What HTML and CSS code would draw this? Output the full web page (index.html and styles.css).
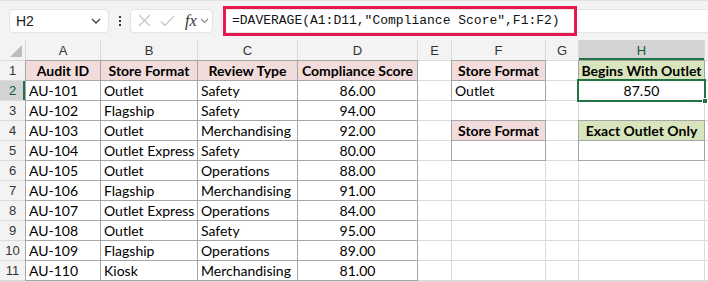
FILE: index.html
```html
<!DOCTYPE html>
<html lang="en">

<head>
    <meta charset="UTF-8">
    <meta name="viewport" content="width=device-width, initial-scale=1.0">
    <title>DAVERAGE</title>
    <link rel="stylesheet" href="styles.css">
</head>

<body>
    <!-- formula bar -->
    <div class="toolbar">
        <div class="namebox">
            <span>H2</span>
            <svg class="chev" width="10" height="6" viewBox="0 0 10 6"><path d="M1 1l4 4 4-4" fill="none" stroke="#444" stroke-width="1.3"/></svg>
        </div>
        <div class="dots"><i></i><i></i><i></i></div>
        <div class="fxbox">
            <svg width="13" height="13" viewBox="0 0 13 13"><path d="M1 1l11 11M12 1L1 12" stroke="#c4c4c4" stroke-width="1.2"/></svg>
            <svg width="15" height="12" viewBox="0 0 15 12"><path d="M1 6.5l4 4L14 1" fill="none" stroke="#c4c4c4" stroke-width="1.2"/></svg>
            <span class="fx">fx</span>
            <svg width="9" height="6" viewBox="0 0 9 6"><path d="M1 1l3.5 3.5L8 1" fill="none" stroke="#888" stroke-width="1.1"/></svg>
        </div>
        <div class="formula">
            <span class="formula-text">=DAVERAGE(A1:D11,"Compliance Score",F1:F2)</span>
        </div>
    </div>

    <!-- worksheet -->
    <div class="sheet">
        <div class="hd corner"><svg width="12" height="12" viewBox="0 0 12 12"><path d="M12 0V12H0z" fill="#bdbdbd"/></svg></div>
        <div class="hd">A</div><div class="hd">B</div><div class="hd">C</div><div class="hd">D</div>
        <div class="hd">E</div><div class="hd">F</div><div class="hd">G</div><div class="hd sel-col">H</div><div class="hd"></div>

        <div class="rh">1</div>
        <div class="c b th pink">Audit ID</div><div class="c b th pink">Store Format</div><div class="c b th pink">Review Type</div><div class="c b th pink">Compliance Score</div>
        <div class="c"></div><div class="c b th pink">Store Format</div><div class="c"></div><div class="c b th green">Begins With Outlet</div><div class="c"></div>

        <div class="rh sel-row">2</div>
        <div class="c b">AU-101</div><div class="c b">Outlet</div><div class="c b">Safety</div><div class="c b num">86.00</div>
        <div class="c"></div><div class="c b">Outlet</div><div class="c"></div><div class="c b num active">87.50</div><div class="c"></div>

        <div class="rh">3</div>
        <div class="c b">AU-102</div><div class="c b">Flagship</div><div class="c b">Safety</div><div class="c b num">94.00</div>
        <div class="c"></div><div class="c"></div><div class="c"></div><div class="c"></div><div class="c"></div>

        <div class="rh">4</div>
        <div class="c b">AU-103</div><div class="c b">Outlet</div><div class="c b">Merchandising</div><div class="c b num">92.00</div>
        <div class="c"></div><div class="c b th pink">Store Format</div><div class="c"></div><div class="c b th green">Exact Outlet Only</div><div class="c"></div>

        <div class="rh">5</div>
        <div class="c b">AU-104</div><div class="c b">Outlet Express</div><div class="c b">Safety</div><div class="c b num">80.00</div>
        <div class="c"></div><div class="c b"></div><div class="c"></div><div class="c b"></div><div class="c"></div>

        <div class="rh">6</div>
        <div class="c b">AU-105</div><div class="c b">Outlet</div><div class="c b">Operations</div><div class="c b num">88.00</div>
        <div class="c"></div><div class="c"></div><div class="c"></div><div class="c"></div><div class="c"></div>

        <div class="rh">7</div>
        <div class="c b">AU-106</div><div class="c b">Flagship</div><div class="c b">Merchandising</div><div class="c b num">91.00</div>
        <div class="c"></div><div class="c"></div><div class="c"></div><div class="c"></div><div class="c"></div>

        <div class="rh">8</div>
        <div class="c b">AU-107</div><div class="c b">Outlet Express</div><div class="c b">Operations</div><div class="c b num">84.00</div>
        <div class="c"></div><div class="c"></div><div class="c"></div><div class="c"></div><div class="c"></div>

        <div class="rh">9</div>
        <div class="c b">AU-108</div><div class="c b">Outlet</div><div class="c b">Safety</div><div class="c b num">95.00</div>
        <div class="c"></div><div class="c"></div><div class="c"></div><div class="c"></div><div class="c"></div>

        <div class="rh">10</div>
        <div class="c b">AU-109</div><div class="c b">Flagship</div><div class="c b">Operations</div><div class="c b num">89.00</div>
        <div class="c"></div><div class="c"></div><div class="c"></div><div class="c"></div><div class="c"></div>

        <div class="rh">11</div>
        <div class="c b">AU-110</div><div class="c b">Kiosk</div><div class="c b">Merchandising</div><div class="c b num">81.00</div>
        <div class="c"></div><div class="c"></div><div class="c"></div><div class="c"></div><div class="c"></div>
    </div>
</body>

</html>
```

FILE: styles.css
```css
body {
    margin: 0;
    width: 708px;
    height: 282px;
    overflow: hidden;
    background-color: #fff;
    font-family: "Liberation Sans", Arial, sans-serif;
}

/* formula bar */
.toolbar {
    height: 40px;
    background-color: #f3f3f3;
    display: flex;
    align-items: center;
    box-sizing: border-box;
    border-top: 1px solid #e2e2e2;
}

.namebox {
    margin-left: 9px;
    width: 100px;
    height: 24px;
    box-sizing: border-box;
    background-color: #fff;
    border: 1px solid #e4e4e4;
    border-radius: 4px;
    display: flex;
    align-items: center;
    justify-content: space-between;
    padding: 0 7px 0 6px;
    font-size: 14px;
    color: #222;
}

.dots {
    width: 21px;
    display: flex;
    flex-direction: column;
    align-items: center;
    gap: 2px;
}

.dots i {
    width: 2px;
    height: 2px;
    background-color: #333;
}

.fxbox {
    width: 83px;
    height: 24px;
    box-sizing: border-box;
    background-color: #fff;
    border: 1px solid #e4e4e4;
    border-radius: 4px;
    display: flex;
    align-items: center;
    padding: 0 0 0 7px;
}

.fxbox svg:nth-child(2) {
    margin-left: 9px;
}

.fx {
    margin-left: 10px;
    margin-right: 3px;
    font-family: "Liberation Serif", serif;
    font-style: italic;
    font-size: 16px;
    color: #333;
}

.formula {
    margin-left: 8px;
    flex: 1;
    height: 24px;
    background-color: #fff;
    border: 1px solid #e4e4e4;
    border-right: none;
    border-radius: 4px 0 0 4px;
    box-sizing: border-box;
    display: flex;
    align-items: center;
}

.formula-text {
    margin-left: 1px;
    width: 354px;
    height: 30px;
    box-sizing: border-box;
    border: 3px solid #e5194d;
    padding-left: 6px;
    font-family: "Liberation Mono", monospace;
    font-size: 13px;
    line-height: 24px;
    color: #111;
    white-space: nowrap;
}

/* worksheet grid */
.sheet {
    display: grid;
    grid-template-columns: 25px 74px 96px 99px 119px 33px 93px 32px 125px 10px;
    grid-template-rows: 20px repeat(11, 19px) 2px;
    gap: 1px;
    background-color: #dadada;
}

.hd {
    background-color: #f3f3f3;
    font-size: 13px;
    color: #333;
    text-align: center;
    line-height: 21px;
}

.corner {
    display: flex;
    align-items: flex-end;
    justify-content: flex-end;
    padding: 0 3px 3px 0;
}

.sel-col {
    background-color: #d3d3d3;
    color: #0e5c2f;
    box-shadow: inset 0 -2px 0 #217346;
}

.rh {
    background-color: #f3f3f3;
    font-size: 13px;
    color: #333;
    text-align: center;
    line-height: 19px;
}

.sel-row {
    background-color: #d3d3d3;
    color: #0e5c2f;
    box-shadow: inset -2px 0 0 #217346;
}

.c {
    background-color: #fff;
    font-family: Lato, "Liberation Sans", sans-serif;
    font-size: 14px;
    line-height: 19px;
    padding-left: 3px;
    white-space: nowrap;
    overflow: hidden;
    color: #000;
}

.b {
    outline: 1px solid #a6a6a6;
    overflow: visible;
}

.th {
    font-weight: bold;
    text-align: center;
    padding-left: 0;
}

.pink {
    background-color: #f2dcdb;
}

.green {
    background-color: #d8e4bc;
}

.num {
    text-align: center;
    padding-left: 0;
}

.active {
    position: relative;
}

.active::after {
    content: "";
    position: absolute;
    left: -2px;
    top: -2px;
    right: -2px;
    bottom: -2px;
    border: 2px solid #217346;
    z-index: 2;
}

.active::before {
    content: "";
    position: absolute;
    right: -4px;
    bottom: -4px;
    width: 6px;
    height: 6px;
    background-color: #217346;
    border: 1px solid #fff;
    box-sizing: border-box;
    z-index: 3;
}
```
